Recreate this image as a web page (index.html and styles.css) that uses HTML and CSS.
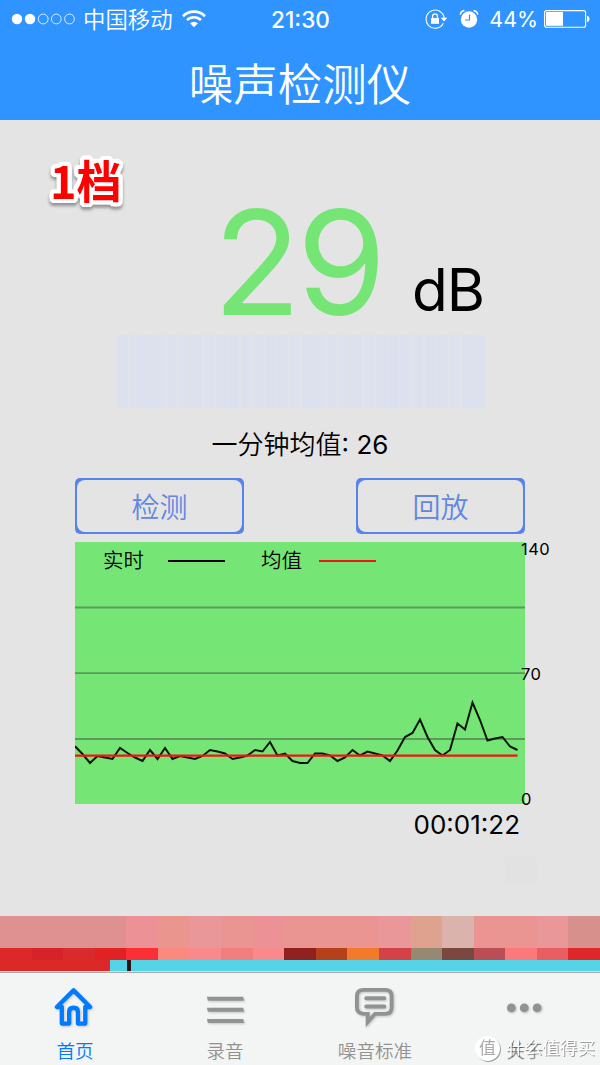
FILE: index.html
```html
<!DOCTYPE html>
<html lang="zh-CN">
<head>
  <meta charset="UTF-8">
  <meta name="viewport" content="width=device-width, initial-scale=1.0">
  <title>噪声检测仪</title>
  <link rel="stylesheet" href="styles.css">
</head>
<body>
  <div class="app">
    <header class="header">
      <!-- Status bar -->
      <div class="status-bar">
        <div class="status-left">
          <svg class="signal" width="64" height="12" viewBox="0 0 64 12" fill="none" stroke="#fff">
            <circle cx="6" cy="6" r="5.2" fill="#fff" stroke="none"/>
            <circle cx="19" cy="6" r="5.2" fill="#fff" stroke="none"/>
            <circle cx="32.2" cy="6" r="4.9" stroke-width="0.8"/>
            <circle cx="45.3" cy="6" r="4.9" stroke-width="0.8"/>
            <circle cx="58.5" cy="6" r="4.9" stroke-width="0.8"/>
          </svg>
          <span class="carrier">中国移动</span>
          <svg class="wifi" width="24" height="18" viewBox="0 0 24 18" fill="none" stroke="#fff">
            <path d="M1 6.2 A15.6 15.6 0 0 1 23 6.2" stroke-width="2.7"/>
            <path d="M5 10.1 A10 10 0 0 1 19 10.1" stroke-width="2.5"/>
            <path d="M12 17.3 L8 13.3 A5.8 5.8 0 0 1 16 13.3 Z" fill="#fff" stroke="none"/>
          </svg>
        </div>
        <span class="clock">21:30</span>
        <div class="status-right">
          <svg class="lock" width="24" height="20" viewBox="0 0 24 20" fill="none" stroke="#fff">
            <path d="M18.3 14.2 A9.1 9.1 0 1 1 19.2 9.2" stroke-width="1.1"/>
            <path d="M15.8 8.8 H22.3 L19 12.6 Z" fill="#fff" stroke="none"/>
            <rect x="6" y="9" width="8" height="5.8" fill="#fff" stroke="none"/>
            <path d="M7.6 9 V7.2 A2.4 2.4 0 0 1 12.4 7.2 V9" stroke-width="1.3"/>
          </svg>
          <svg class="alarm" width="20" height="20" viewBox="0 0 20 20" fill="none" stroke="#fff">
            <circle cx="10" cy="10.5" r="8.2" fill="#fff" stroke="none"/>
            <path d="M1.3 5.6 Q1.7 2.2 5.4 1.5 M14.6 1.5 Q18.3 2.2 18.7 5.6" stroke-width="1.5"/>
            <path d="M10.5 5.5 V11 H6" stroke="#2f94ff" stroke-width="1.2"/>
          </svg>
          <span class="percent">44%</span>
          <svg class="battery" width="46" height="18" viewBox="0 0 46 18">
            <rect x="0.6" y="0.6" width="41" height="16.6" rx="2" fill="none" stroke="#fff" stroke-width="1.1"/>
            <rect x="2" y="2" width="17" height="13.8" fill="#fff"/>
            <path d="M43 5.8 Q45.6 6.4 45.6 9 Q45.6 11.6 43 12.2 Z" fill="#fff"/>
          </svg>
        </div>
      </div>
      <h1>噪声检测仪</h1>
    </header>

    <main class="content">
      <div class="level-tag">1档</div>

      <div class="reading">
        <span class="value">29</span>
        <span class="unit">dB</span>
      </div>

      <div class="meter"></div>

      <p class="average">一分钟均值<span>: 26</span></p>

      <div class="buttons">
        <button><span>检测</span></button>
        <button><span>回放</span></button>
      </div>

      <!-- Chart -->
      <div class="chart-row">
        <div class="chart">
          <svg width="450" height="262" viewBox="0 0 450 262" fill="none">
            <g stroke="#5c9a5c" stroke-width="1.8">
              <path d="M0 65.5 H450 M0 131.2 H450 M0 197 H450"/>
            </g>
            <polyline stroke="#0a140a" stroke-width="2" points="0,204.3 7.5,212 15,221 22.5,214 30,215.5 37.5,217 45,206 52.5,211 60,215.5 67.5,219 75,208 82.5,217 90,206 97.5,217 105,214 112.5,215.5 120,217 127.5,214 135,208 142.5,209.5 150,211.5 157.5,217 165,215.5 172.5,213.5 180,208 187.5,209.5 195,200 202.5,213.5 210,211.5 217.5,219 225,221 232.5,221 240,211.5 247.5,211.5 255,213.5 262.5,219 270,215.5 277.5,208 285,213.5 292.5,209.5 300,211.5 307.5,213.5 315,219 322.5,208.5 330,195 337.5,191 345,177.5 352.5,195 360,208 367.5,213.5 375,208 382.5,181.5 390,187.5 397.5,160.5 405,178 412.5,198.5 420,196.5 427.5,195 435,204.5 442.5,208"/>
            <path d="M0 213.7 H442.5" stroke="#f01414" stroke-width="2.2"/>
          </svg>
          <div class="legend">
            <span>实时</span><i class="line"></i>
            <span>均值</span><i class="line line-red"></i>
          </div>
        </div>
        <div class="scale">
          <span>140</span>
          <span>70</span>
          <span>0</span>
        </div>
      </div>

      <div class="elapsed">00:01:22</div>
      <div class="patch"></div>
    </main>

    <!-- Banner -->
    <div class="banner">
      <div class="tiles tiles-top">
        <i class="c1"></i><i class="c1"></i><i class="c1"></i><i class="c1"></i><i class="c2"></i><i class="c3"></i><i class="c4"></i><i class="c5"></i><i class="c2"></i><i class="c5"></i><i class="c5"></i><i class="c5"></i><i class="c4"></i><i class="c6"></i><i class="c7"></i><i class="c5"></i><i class="c5"></i><i class="c4"></i><i class="c8"></i>
      </div>
      <div class="tiles tiles-bottom">
        <i class="d1"></i><i class="d2"></i><i class="d3"></i><i class="d4"></i><i class="d5"></i><i class="d6"></i><i class="d7"></i><i class="d8"></i><i class="d7"></i><i class="d9"></i><i class="d10"></i><i class="d11"></i><i class="d12"></i><i class="d13"></i><i class="d14"></i><i class="d15"></i><i class="d16"></i><i class="d17"></i><i class="d1"></i>
      </div>
      <div class="strip"></div>
    </div>

    <nav class="tabs">
      <a class="tab active">
        <svg width="44" height="44" viewBox="0 0 44 44" fill="none" stroke="#007aff" stroke-width="4.4" stroke-linejoin="round" stroke-linecap="round">
          <path d="M20.5 5.5 L3.5 22.5 H8.5 V39.5 H16 V27.5 Q16 23.3 20.5 23.3 Q25 23.3 25 27.5 V39.5 H32.5 V22.5 H37.5 Z"/>
        </svg>
        <span>首页</span>
      </a>
      <a class="tab">
        <svg width="44" height="44" viewBox="0 0 44 44" fill="#929292">
          <path d="M3.5 12 H40.5 L41.5 16 H4.5 Z M3.5 23.4 H40.5 L41.5 27.4 H4.5 Z M3.5 34.8 H40.5 L41.5 38.8 H4.5 Z"/>
        </svg>
        <span>录音</span>
      </a>
      <a class="tab">
        <svg width="44" height="44" viewBox="0 0 44 44" fill="none" stroke="#929292" stroke-width="4">
          <path d="M10.5 5 H32.5 Q39 5 39 11.5 V23 Q39 29.5 32.5 29.5 H22 L14.5 38 V29.5 H10.5 Q3.5 29 3.5 23 V11.5 Q3.5 5 10.5 5 Z"/>
          <path d="M13 13.5 H31.5 M13 22 H31.5" stroke-linecap="round"/>
        </svg>
        <span>噪音标准</span>
      </a>
      <a class="tab">
        <svg width="44" height="44" viewBox="0 0 44 44" fill="#929292">
          <circle cx="8" cy="23.5" r="4.5"/>
          <circle cx="21.2" cy="23.5" r="4.5"/>
          <circle cx="34.4" cy="23.5" r="4.5"/>
        </svg>
        <span>关于</span>
      </a>
      <div class="watermark">
        <b>值</b>
        <span>什么值得买</span>
      </div>
    </nav>
  </div>
</body>
</html>
```
FILE: styles.css
```css
* {
  margin: 0;
  padding: 0;
  box-sizing: border-box;
}

body {
  background-color: #e4e4e4;
  font-family: Inter, 'Noto Sans CJK SC', sans-serif;
}

.app {
  width: 600px;
  height: 1065px;
  display: flex;
  flex-direction: column;
  overflow: hidden;
}

.header {
  height: 120px;
  background-color: #2f94ff;
  color: white;
}

.status-bar {
  height: 38px;
  padding: 0 10px 0 11px;
  display: grid;
  grid-template-columns: 1fr auto 1fr;
  align-items: center;
  font-size: 22px;
}

.status-left {
  display: flex;
  align-items: center;
}

.carrier {
  margin: 0 9px 0 8px;
  padding-top: 2px;
  font-size: 22.4px;
  font-weight: 350;
  line-height: 36px;
}

.clock {
  font-size: 22.6px;
  font-weight: 500;
}

.status-right {
  display: flex;
  align-items: center;
  justify-content: flex-end;
}

.alarm {
  margin: 0 10px 0 10px;
}

.percent {
  margin-right: 6px;
  font-size: 21.4px;
  font-weight: 400;
}

.header h1 {
  padding-top: 2px;
  font-size: 44.5px;
  font-weight: 350;
  line-height: 90px;
  text-align: center;
}

.content {
  height: 796px;
  display: flex;
  flex-direction: column;
  padding: 0 75px;
}

.level-tag {
  height: 64px;
  margin: 28px 0 1px -25px;
  font-family: 'Noto Sans CJK SC', sans-serif;
  font-size: 45px;
  font-weight: 700;
  line-height: 64px;
  color: #ff0000;
  text-shadow:
    4px 0 #fff, -4px 0 #fff, 0 4px #fff, 0 -4px #fff,
    3px 3px #fff, -3px 3px #fff, 3px -3px #fff, -3px -3px #fff,
    4px 2px #fff, -4px 2px #fff, 4px -2px #fff, -4px -2px #fff,
    2px 4px #fff, -2px 4px #fff, 2px -4px #fff, -2px -4px #fff;
  filter: drop-shadow(0 3px 1.5px rgba(0, 0, 0, 0.35));
}

.reading {
  height: 122px;
  margin-left: 138px;
  display: flex;
  align-items: flex-start;
  line-height: 100px;
}

.value {
  width: 199px;
  font-size: 144.5px;
  letter-spacing: -4.5px;
  color: #75e675;
}

.unit {
  margin-top: 27px;
  font-size: 58.5px;
  letter-spacing: -1px;
  color: #000;
}

.meter {
  width: 369px;
  height: 73px;
  margin-left: 41px;
  background: repeating-linear-gradient(90deg, #e2e3e8 0 1.5px, #dde1ee 1.5px 12.3px);
}

.average {
  margin-top: 17px;
  font-size: 26px;
  font-weight: 350;
  line-height: 40px;
  text-align: center;
}

.average span {
  font-weight: 400;
}

.buttons {
  margin-top: 13px;
  display: flex;
  justify-content: space-between;
}

button {
  width: 169px;
  height: 56px;
  padding: 2px;
  border: none;
  border-radius: 5px;
  background-color: #5784ea;
  color: #6287e0;
  font-family: inherit;
  font-size: 28px;
  font-weight: 350;
}

button span {
  display: block;
  height: 52px;
  padding-top: 2px;
  border-radius: 8px;
  background-color: #e4e4e4;
  line-height: 52px;
}

.chart-row {
  margin-top: 8px;
  display: flex;
  height: 262px;
}

.chart {
  position: relative;
  flex: none;
  width: 450px;
  background-color: #75e675;
}

.chart svg {
  display: block;
}

.legend {
  position: absolute;
  top: 4px;
  left: 28px;
  display: flex;
  align-items: center;
  font-size: 20.5px;
  font-weight: 350;
  line-height: 30px;
}

.legend .line {
  width: 57px;
  height: 2px;
  margin: -1px 36px 0 24px;
  background-color: #000;
}

.legend .line-red {
  margin: -1px 0 0 17px;
  background-color: #f01414;
}

.scale {
  z-index: 1;
  display: flex;
  flex-direction: column;
  justify-content: space-between;
  margin: -3px 0 -5px -4px;
  font-size: 16.5px;
  letter-spacing: 0.5px;
  line-height: 20px;
}

.elapsed {
  margin: 4px 5px 0 0;
  font-size: 26px;
  line-height: 34px;
  text-align: right;
}

.patch {
  width: 32px;
  height: 27px;
  margin: 15px -12px 0 auto;
  background-color: #e2e2e2;
}

.banner {
  height: 56px;
}

.tiles {
  display: grid;
  grid-template-columns: repeat(19, 1fr);
}

.tiles-top {
  height: 32px;
}

.tiles-bottom {
  height: 12px;
}

.c1 { background-color: #df9090; }
.c2 { background-color: #ec9297; }
.c3 { background-color: #eb958f; }
.c4 { background-color: #e99798; }
.c5 { background-color: #eb9593; }
.c6 { background-color: #dfa28f; }
.c7 { background-color: #d9b3ac; }
.c8 { background-color: #d7908c; }

.d1 { background-color: #dc2828; }
.d2 { background-color: #d42427; }
.d3 { background-color: #d92a2c; }
.d4 { background-color: #e02224; }
.d5 { background-color: #fa3036; }
.d6 { background-color: #fb8980; }
.d7 { background-color: #f98a8c; }
.d8 { background-color: #f27e7e; }
.d9 { background-color: #90211e; }
.d10 { background-color: #b54019; }
.d11 { background-color: #f37a2b; }
.d12 { background-color: #d44247; }
.d13 { background-color: #978872; }
.d14 { background-color: #7b483f; }
.d15 { background-color: #b94e54; }
.d16 { background-color: #fb797b; }
.d17 { background-color: #ea5d61; }

.strip {
  height: 12px;
  border-bottom: 1px solid #d4dcdc;
  background: linear-gradient(90deg, #dc2828 110px, #54d4e6 110px 127px, #2a1514 127px 131px, #54d4e6 131px);
}

.tabs {
  position: relative;
  height: 93px;
  display: flex;
  border-top: 1px solid #aaacac;
  background-color: #f3f4f4;
}

.tab {
  width: 150px;
  padding-top: 12px;
  display: flex;
  flex-direction: column;
  align-items: center;
  color: #929292;
  font-size: 18.6px;
  font-weight: 350;
}

.tab svg {
  filter: drop-shadow(1px 1px 1px rgba(0, 0, 0, 0.2));
}

.tab span {
  margin-top: 9px;
  line-height: 28px;
}

.tab.active {
  color: #007aff;
}

/* Overlay in the corner of the tab bar */
.watermark {
  position: absolute;
  right: 5px;
  bottom: 4px;
  display: flex;
  align-items: center;
  gap: 7px;
  color: #fff;
  font-size: 17.6px;
  line-height: 26px;
  filter: drop-shadow(1px 1px 0.7px rgba(0, 0, 0, 0.35));
}

.watermark b {
  width: 25px;
  height: 25px;
  border-radius: 50%;
  background-color: #fff;
  color: #aaa;
  font-size: 17px;
  font-weight: 400;
  line-height: 24px;
  text-align: center;
}
```
